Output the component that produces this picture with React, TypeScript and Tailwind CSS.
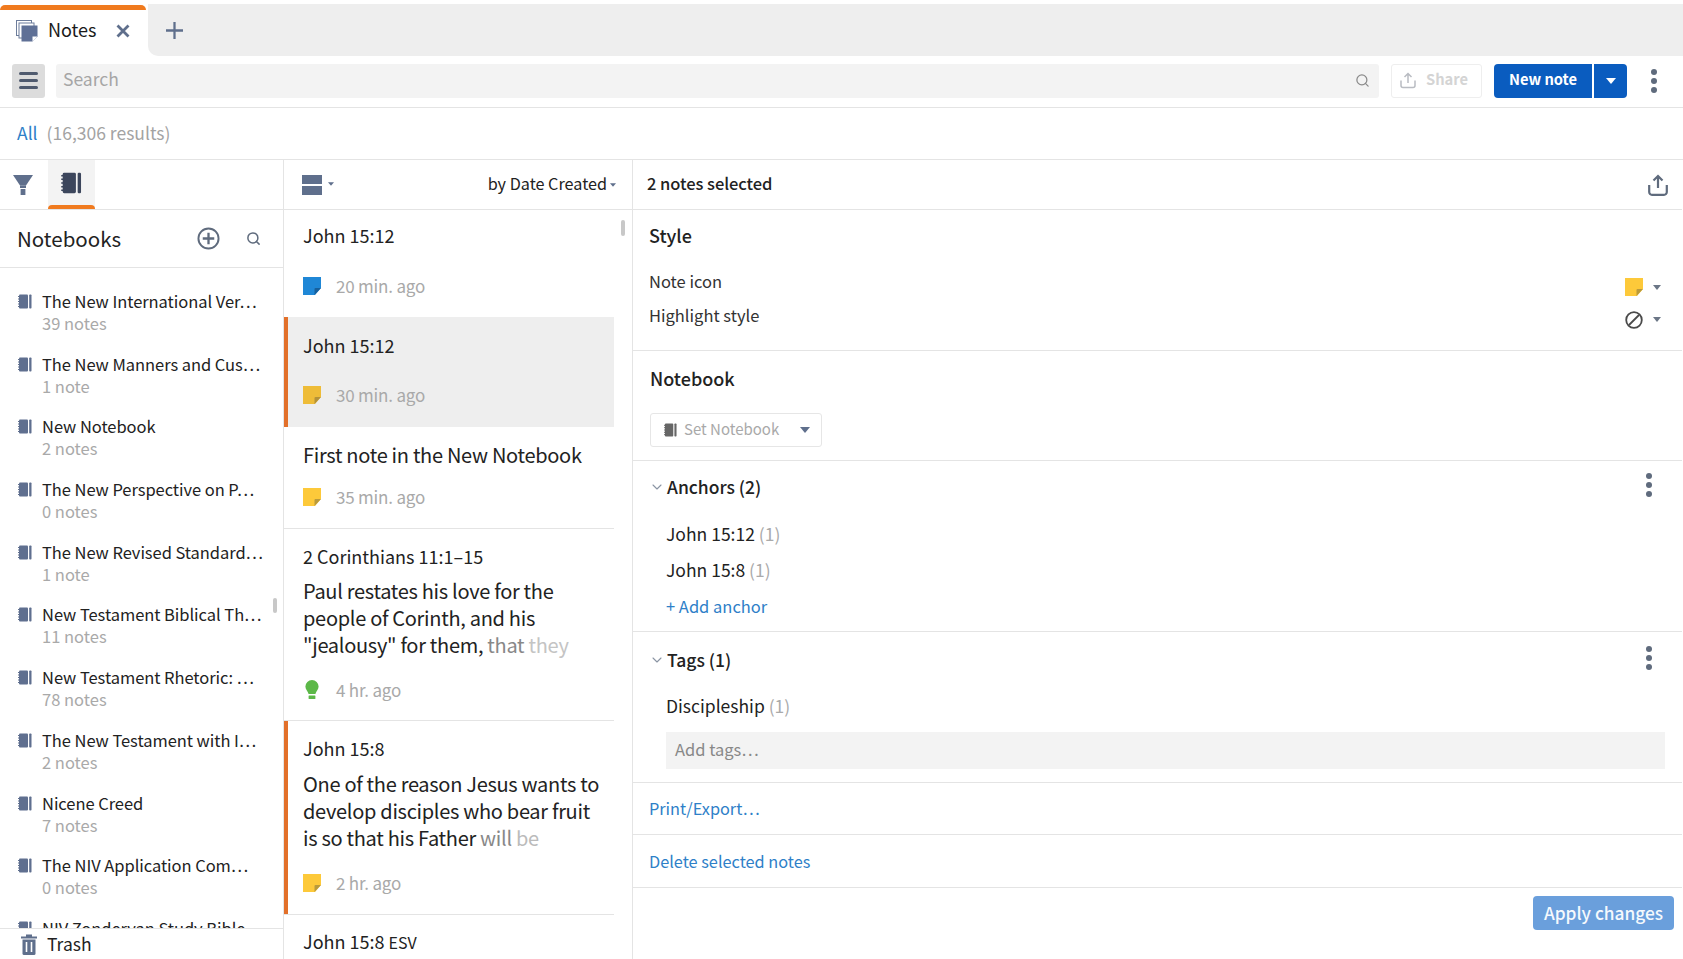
import { ChevronDown, Search } from "lucide-react";

const notebooks = [
  ["The New International Ver…", "39 notes"],
  ["The New Manners and Cus…", "1 note"],
  ["New Notebook", "2 notes"],
  ["The New Perspective on P…", "0 notes"],
  ["The New Revised Standard…", "1 note"],
  ["New Testament Biblical Th…", "11 notes"],
  ["New Testament Rhetoric: …", "78 notes"],
  ["The New Testament with I…", "2 notes"],
  ["Nicene Creed", "7 notes"],
  ["The NIV Application Com…", "0 notes"],
  ["NIV Zondervan Study Bible", ""],
];

function NotebookIcon({ className = "", fill = "#5f6f8f" }: { className?: string; fill?: string }) {
  return (
    <svg viewBox="0 0 14 15" className={className}>
      <rect x="1" y="0.5" width="9" height="14" rx="1" fill={fill} />
      <rect x="11.200" y="0.5" width="2.300" height="14" rx="0.8" fill={fill} />
      <path d="M0 2.500h2M0 5h2M0 7.500h2M0 10h2M0 12.500h2" stroke={fill} strokeWidth="1" />
    </svg>
  );
}

function NoteIcon({ color, fold, className = "w-[18px] h-[18px]" }: { color: string; fold: string; className?: string }) {
  return (
    <svg viewBox="0 0 18 18" className={className}>
      <path d="M0 0h18v11l-6 7H0z" fill={color} />
      <path d="M18 11h-5.500a1 1 0 0 0-1 1V18z" fill={fold} />
    </svg>
  );
}

function Caret({ className = "" }: { className?: string }) {
  return (
    <svg viewBox="0 0 10 6" className={className}>
      <path d="M0 0h10L5 6z" fill="currentColor" />
    </svg>
  );
}

function Dots({ className = "" }: { className?: string }) {
  return (
    <div className={`flex flex-col gap-[3px] ${className}`}>
      <span className="w-[6px] h-[6px] rounded-full bg-[#5f6b7d]" />
      <span className="w-[6px] h-[6px] rounded-full bg-[#5f6b7d]" />
      <span className="w-[6px] h-[6px] rounded-full bg-[#5f6b7d]" />
    </div>
  );
}

function Meta({ icon, time }: { icon: React.ReactNode; time: string }) {
  return (
    <div className="flex items-center h-[24px]">
      <div className="w-[33px] shrink-0">{icon}</div>
      <span className="text-[17px] tracking-[-0.2px] leading-[24px] text-[#a9a9a9]">{time}</span>
    </div>
  );
}

const yellow = <NoteIcon color="#fdc93a" fold="#b99a3c" />;
const yellowDim = <NoteIcon color="#eebc38" fold="#b3923a" />;
const blue = <NoteIcon color="#1f87d6" fold="#17609c" />;
const bulb = (
  <svg viewBox="0 0 18 20" className="w-[18px] h-[20px]">
    <path d="M9 0a6.600 6.600 0 0 0-6.600 6.600c0 3 2.400 4.400 3.200 7.400h6.800c.8-3 3.200-4.400 3.200-7.400A6.600 6.600 0 0 0 9 0z" fill="#5cb848" />
    <rect x="5.600" y="15.400" width="6.800" height="3.600" rx="0.6" fill="#5cb848" />
  </svg>
);

export default function App() {
  return (
    <div
      className="w-full h-[959px] overflow-hidden bg-white text-[#222] flex flex-col"
      style={{ fontFamily: '"Noto Sans CJK SC", "Noto Sans", sans-serif' }}
    >
      {/* tab strip */}
      <div className="mt-[4px] h-[52px] flex shrink-0">
        <div className="relative w-[148px] pt-[2px] flex items-center bg-white pl-[16px]">
          <div className="absolute left-0 right-[2px] top-[1px] h-[5px] rounded-t-[8px] bg-[#f07a1e]" />
          <svg viewBox="0 0 22 22" className="w-[22px] h-[22px]">
            <rect x="0.5" y="0.5" width="15" height="15" fill="none" stroke="#6d7d9b" strokeWidth="1" />
            <rect x="3" y="3" width="15" height="15" fill="#fff" stroke="#6d7d9b" strokeWidth="1" />
            <path d="M5.500 5.500h16v11l-5 5h-11z" fill="#5f7096" />
            <path d="M21.500 16.500h-5v5z" fill="#fff" />
          </svg>
          <span className="ml-[10px] pb-[3px] text-[18px] text-[#1a1a1a]">Notes</span>
          <svg viewBox="0 0 14 14" className="ml-[19px] w-[14px] h-[14px]">
            <path d="M1.500 1.500l11 11M12.500 1.500l-11 11" stroke="#5f6f8c" strokeWidth="2.800" />
          </svg>
        </div>
        <div className="flex-1 bg-[#eeeeee] rounded-bl-[10px] flex items-center pl-[18px]">
          <svg viewBox="0 0 18 18" className="w-[17px] h-[17px]">
            <path d="M9 0v18M0 9h18" stroke="#5f6f8c" strokeWidth="2.400" />
          </svg>
        </div>
      </div>

      {/* toolbar */}
      <div className="h-[52px] shrink-0 border-b border-[#e4e4e4] flex items-center pb-[2px] pl-[12px] pr-[26px]">
        <button className="w-[33px] h-[34px] bg-[#dcdcdc] rounded-[3px] flex flex-col items-center justify-center gap-[4px]">
          <span className="w-[19px] h-[3px] rounded-full bg-[#4f5a6e]" />
          <span className="w-[19px] h-[3px] rounded-full bg-[#4f5a6e]" />
          <span className="w-[19px] h-[3px] rounded-full bg-[#4f5a6e]" />
        </button>
        <div className="ml-[11px] w-[1323px] h-[34px] bg-[#f3f3f3] rounded-[3px] flex items-center justify-between pl-[7px] pr-[9px]">
          <span className="pb-[2px] text-[17.500px] text-[#a6a6a6]">Search</span>
          <Search size={15} strokeWidth={2} className="text-[#8a8a8a]" />
        </div>
        <div className="ml-[12px] w-[91px] h-[34px] border border-[#eeeeee] rounded-[3px] flex items-center pl-[8px]">
          <svg viewBox="0 0 16 17" className="w-[16px] h-[17px]">
            <path d="M8 11V1.500M4.500 5L8 1.500 11.500 5" fill="none" stroke="#b9bcc2" strokeWidth="1.500" />
            <path d="M1 8.500v5a2 2 0 0 0 2 2h10a2 2 0 0 0 2-2v-5" fill="none" stroke="#b9bcc2" strokeWidth="1.500" />
          </svg>
          <span className="ml-[10px] pb-[2px] text-[14.700px] font-bold text-[#d4d4d4]">Share</span>
        </div>
        <button className="ml-[12px] w-[98px] h-[34px] pb-[2px] bg-[#0a5cbf] rounded-l-[4px] text-white text-[14.700px] font-bold">New note</button>
        <button className="ml-[2px] w-[33px] h-[34px] bg-[#0a5cbf] rounded-r-[4px] text-white flex items-center justify-center">
          <Caret className="w-[10px] h-[6px]" />
        </button>
        <Dots className="ml-[24px]" />
      </div>

      {/* results row */}
      <div className="h-[52px] shrink-0 border-b border-[#e4e4e4] flex items-center pl-[17px] text-[17.500px]">
        <span className="text-[#2e80c8]">All</span>
        <span className="ml-[9px] text-[#a3a3a3]">(16,306 results)</span>
      </div>

      <div className="flex-1 flex min-h-0">
        {/* notebooks */}
        <div className="relative w-[284px] shrink-0 border-r border-[#e4e4e4] flex flex-col">
          <div className="h-[50px] shrink-0 border-b border-[#e4e4e4] flex pl-[13px]">
            <div className="w-[35px] flex items-center">
              <svg viewBox="0 0 20 20" className="w-[20px] h-[20px]">
                <path d="M0 0h20L13 10.500H7z" fill="#5f6f8c" />
                <path d="M7 10.500h6V13H7zM7.600 14h4.800v6H7.600z" fill="#5f6f8c" />
              </svg>
            </div>
            <div className="w-[47px] bg-[#f3f3f3] relative flex items-center justify-center pb-[3px]">
              <NotebookIcon className="w-[21px] h-[22px]" fill="#3c465c" />
              <div className="absolute left-0 right-0 bottom-0 h-[4px] rounded-t-[4px] bg-[#f07a1e]" />
            </div>
          </div>
          <div className="h-[58px] shrink-0 border-b border-[#e4e4e4] flex items-center pl-[17px] pr-[22px]">
            <span className="text-[20.500px] text-[#222] flex-1">Notebooks</span>
            <svg viewBox="0 0 24 24" className="w-[23px] h-[23px]">
              <circle cx="12" cy="12" r="10.500" fill="none" stroke="#5f6b7d" strokeWidth="2" />
              <path d="M12 6v12M6 12h12" stroke="#5f6b7d" strokeWidth="2.400" />
            </svg>
            <Search size={15} strokeWidth={2.400} className="ml-[26px] text-[#5f6b7d]" />
          </div>
          <div className="flex-1 min-h-0 overflow-hidden pt-[21px]">
            {notebooks.map(([name, count]) => (
              <div key={name} className="h-[62.700px] flex pl-[18px]">
                <NotebookIcon className="mt-[5px] w-[14px] h-[15px] shrink-0" />
                <div className="ml-[10px]">
                  <div className="text-[16.500px] tracking-[-0.05px] leading-[24px] text-[#222] whitespace-nowrap">{name}</div>
                  {count && <div className="text-[16.500px] leading-[21px] text-[#a9a9a9]">{count}</div>}
                </div>
              </div>
            ))}
          </div>
          <div className="h-[31px] shrink-0 border-t border-[#e4e4e4] bg-white flex items-center pl-[21px]">
            <svg viewBox="0 0 16 21" className="w-[16px] h-[21px]">
              <path d="M0 2.500h16v2H0zM5 .5h6v2H5z" fill="#5f6f8c" />
              <path d="M1.500 5.500h13V19.500a1.500 1.500 0 0 1-1.500 1.500H3a1.500 1.500 0 0 1-1.500-1.500z" fill="#5f6f8c" />
              <path d="M5.500 8v10M10.500 8v10" stroke="#fff" strokeWidth="1.600" />
            </svg>
            <span className="ml-[10px] text-[17.500px] text-[#222]">Trash</span>
          </div>
          <div className="absolute left-[273px] top-[438px] w-[4px] h-[15px] rounded-full bg-[#c8c8c8]" />
        </div>

        {/* note list */}
        <div className="relative w-[349px] shrink-0 border-r border-[#e4e4e4] flex flex-col">
          <div className="h-[50px] shrink-0 border-b border-[#e4e4e4] flex items-center pl-[18px] pr-[16px]">
            <div className="flex flex-col gap-[2px]">
              <span className="w-[20px] h-[9px] bg-[#5f6f8c]" />
              <span className="w-[20px] h-[9px] bg-[#5f6f8c]" />
            </div>
            <Caret className="ml-[6px] mb-[2px] w-[6px] h-[4px] text-[#5f6f8c]" />
            <span className="ml-auto pb-[2px] text-[16.200px] text-[#222]">by Date Created</span>
            <Caret className="ml-[3px] w-[6px] h-[4px] text-[#5f6f8c]" />
          </div>
          <div className="w-[330px] flex-1 min-h-0 overflow-hidden">
            <div className="h-[107px] pl-[19px] pt-[12px]">
              <div className="text-[18px] leading-[26px] text-[#222]">John 15:12</div>
              <div className="mt-[26px]"><Meta icon={blue} time="20 min. ago" /></div>
            </div>
            <div className="h-[110px] bg-[#eeeeee] border-l-[4px] border-[#e2702a] pl-[15px] pt-[15px]">
              <div className="text-[18px] leading-[26px] text-[#222]">John 15:12</div>
              <div className="mt-[25px]"><Meta icon={yellowDim} time="30 min. ago" /></div>
            </div>
            <div className="h-[102px] pl-[19px] pt-[13px] border-b border-[#e4e4e4]">
              <div className="text-[20px] tracking-[-0.3px] leading-[30px] text-[#222]">First note in the New Notebook</div>
              <div className="mt-[15px]"><Meta icon={yellow} time="35 min. ago" /></div>
            </div>
            <div className="h-[192px] pl-[19px] pt-[15px] border-b border-[#e4e4e4]">
              <div className="text-[18px] leading-[24px] text-[#222]">2 Corinthians 11:1–15</div>
              <div className="mt-[9px] text-[20px] tracking-[-0.3px] leading-[27px] text-[#222] whitespace-nowrap">
                <div>Paul restates his love for the</div>
                <div>people of Corinth, and his</div>
                <div>"jealousy" for them, <span className="text-[#888]">that </span><span className="text-[#c4c4c4]">they</span></div>
              </div>
              <div className="mt-[20px]"><Meta icon={bulb} time="4 hr. ago" /></div>
            </div>
            <div className="h-[193px] border-l-[4px] border-[#e2702a] pl-[15px] pt-[15px]">
              <div className="text-[18px] leading-[24px] text-[#222]">John 15:8</div>
              <div className="mt-[10px] text-[20px] tracking-[-0.3px] leading-[27px] text-[#222] whitespace-nowrap">
                <div>One of the reason Jesus wants to</div>
                <div>develop disciples who bear fruit</div>
                <div>is so that his Father <span className="text-[#888]">will </span><span className="text-[#bbb]">be</span></div>
              </div>
              <div className="mt-[20px]"><Meta icon={yellow} time="2 hr. ago" /></div>
            </div>
            <div className="border-t border-[#e4e4e4] pl-[19px] pt-[14px]">
              <div className="text-[18px] leading-[24px] text-[#222]">
                John 15:8 <span className="text-[16px]">ESV</span>
              </div>
            </div>
          </div>
          <div className="absolute left-[337px] top-[60px] w-[4px] h-[16px] rounded-full bg-[#c8c8c8]" />
        </div>

        {/* detail */}
        <div className="flex-1 min-w-0 flex flex-col mr-px">
          <div className="h-[50px] shrink-0 border-b border-[#e4e4e4] flex items-center pl-[14px] pr-[14px] justify-between">
            <span className="pb-[2px] text-[16.500px] tracking-[-0.05px] font-medium text-[#222]">2 notes selected</span>
            <svg viewBox="0 0 20 22" className="w-[20px] h-[22px]">
              <path d="M10 14V2M5.500 6.500L10 2l4.500 4.500" fill="none" stroke="#5f6b7d" strokeWidth="2.200" />
              <path d="M1.200 11v7a2.800 2.800 0 0 0 2.800 2.800h12a2.800 2.800 0 0 0 2.800-2.800v-7" fill="none" stroke="#5f6b7d" strokeWidth="2.200" />
            </svg>
          </div>

          <div className="h-[141px] shrink-0 border-b border-[#e4e4e4] pl-[16px] pr-[21px] pt-[12px]">
            <div className="text-[18px] leading-[26px] font-medium text-[#222]">Style</div>
            <div className="mt-[21px] flex items-center justify-between h-[24px]">
              <span className="text-[16.500px] text-[#333]">Note icon</span>
              <div className="flex items-center gap-[10px] mt-[12px]">
                <NoteIcon color="#fdc93a" fold="#b99a3c" />
                <Caret className="w-[8px] h-[5px] text-[#6b7686]" />
              </div>
            </div>
            <div className="mt-[10px] flex items-center justify-between h-[24px]">
              <span className="text-[16.500px] text-[#333]">Highlight style</span>
              <div className="flex items-center gap-[10px] mt-[9px]">
                <svg viewBox="0 0 18 18" className="w-[18px] h-[18px]">
                  <circle cx="9" cy="9" r="7.800" fill="none" stroke="#4a4a4a" strokeWidth="1.800" />
                  <path d="M4 14L14 4" stroke="#4a4a4a" strokeWidth="1.800" />
                </svg>
                <Caret className="w-[8px] h-[5px] text-[#6b7686]" />
              </div>
            </div>
          </div>

          <div className="h-[110px] shrink-0 border-b border-[#e4e4e4] pl-[17px] pt-[14px]">
            <div className="text-[18px] leading-[26px] font-medium text-[#222]">Notebook</div>
            <div className="mt-[22px] w-[172px] h-[34px] border border-[#e6e6e6] rounded-[3px] flex items-center pl-[13px]">
              <NotebookIcon className="w-[13px] h-[14px]" fill="#666" />
              <span className="ml-[7px] pb-[1px] text-[15px] text-[#a9a9a9]">Set Notebook</span>
              <Caret className="ml-auto mr-[11px] w-[10px] h-[6px] text-[#5f6f8c]" />
            </div>
          </div>

          <div className="h-[171px] shrink-0 border-b border-[#e4e4e4] pl-[16px] pr-[30px] pt-[13px]">
            <div className="flex items-center h-[26px]">
              <ChevronDown size={16} strokeWidth={1.600} className="text-[#8a94a3]" />
              <span className="ml-[2px] text-[17.500px] font-medium text-[#222]">Anchors (2)</span>
              <Dots className="ml-auto mb-[4px]" />
            </div>
            <div className="pl-[17px] mt-[16px] text-[17.500px]">
              <div className="h-[36px] leading-[36px]">John 15:12 <span className="text-[#aaa]">(1)</span></div>
              <div className="h-[36px] leading-[36px]">John 15:8 <span className="text-[#aaa]">(1)</span></div>
              <div className="h-[36px] leading-[36px] text-[16.500px] text-[#2e80c8]">+ Add anchor</div>
            </div>
          </div>

          <div className="h-[151px] shrink-0 border-b border-[#e4e4e4] pl-[16px] pr-[30px] pt-[15px]">
            <div className="flex items-center h-[26px]">
              <ChevronDown size={16} strokeWidth={1.600} className="text-[#8a94a3]" />
              <span className="ml-[2px] text-[17.500px] font-medium text-[#222]">Tags (1)</span>
              <Dots className="ml-auto mb-[4px]" />
            </div>
            <div className="pl-[17px] mt-[20px] text-[17.500px] h-[26px] leading-[26px]">
              Discipleship <span className="text-[#aaa]">(1)</span>
            </div>
            <div className="ml-[17px] mr-[-13px] mt-[13px] h-[37px] bg-[#f3f3f3] flex items-center pl-[9px] pb-[2px] text-[16.500px] text-[#888]">
              Add tags…
            </div>
          </div>

          <div className="h-[52px] shrink-0 border-b border-[#e4e4e4] flex items-center pl-[16px] text-[16.300px] text-[#2e80c8]">Print/Export…</div>
          <div className="h-[53px] shrink-0 border-b border-[#e4e4e4] flex items-center pl-[16px] text-[16.300px] text-[#2e80c8]">Delete selected notes</div>
          <div className="flex justify-end pt-[8px] pr-[8px]">
            <button className="w-[141px] h-[34px] pb-[1px] rounded-[4px] bg-[#6a9fdc] text-[#f5f9fd] text-[17.300px] font-medium">Apply changes</button>
          </div>
        </div>
      </div>
    </div>
  );
}
